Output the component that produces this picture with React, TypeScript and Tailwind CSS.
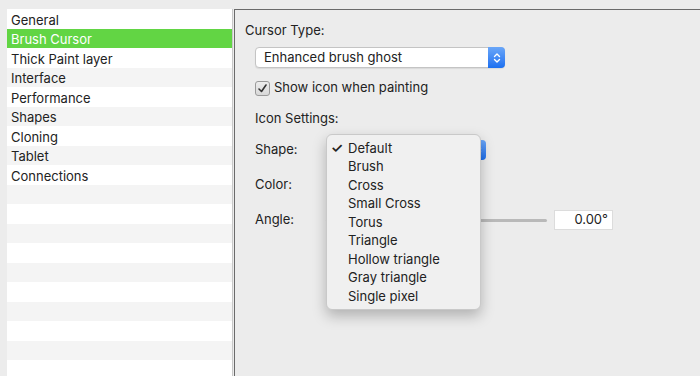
import React from "react";

const items = ["General", "Brush Cursor", "Thick Paint layer", "Interface", "Performance", "Shapes", "Cloning", "Tablet", "Connections"];
const menuItems = ["Default", "Brush", "Cross", "Small Cross", "Torus", "Triangle", "Hollow triangle", "Gray triangle", "Single pixel"];

function Stepper({ className }: { className: string }) {
  return (
    <div className={className}>
      <svg width="8" height="12" viewBox="0 0 8 12" fill="none" stroke="white" strokeWidth="1.4" strokeLinecap="round" strokeLinejoin="round">
        <path d="M1.5 4.5 L4 2 L6.5 4.5" />
        <path d="M1.5 7.5 L4 10 L6.5 7.5" />
      </svg>
    </div>
  );
}

export default function App() {
  const rows = Array.from({ length: 19 }, (_, i) => i);
  return (
    <div className="w-[700px] h-[376px] bg-[#ececec] overflow-hidden flex pt-[9px] pl-[7px] text-[13px] text-[#222]" style={{ fontFamily: "Inter, 'Noto Sans', sans-serif" }}>
      <div className="w-[226px] h-[400px] bg-white border-r border-[#c8c8c8] flex flex-col">
        {rows.map((i) => {
          const label = items[i];
          const selected = i === 1;
          const bg = selected ? "bg-[#62d544] text-white" : i % 2 === 1 ? "bg-[#f4f4f4]" : "bg-white";
          return (
            <div key={i} className={`h-[19.5px] shrink-0 flex items-center pl-[4px] pt-[3px] leading-none ${bg}`}>
              {label ?? ""}
            </div>
          );
        })}
      </div>
      <div className="relative flex-1 h-[400px] ml-[1px] border-l border-t border-[#6a6a6a] bg-[#ececec] flex flex-col pl-[10px] pt-[12px]">
        <div className="h-[16px] leading-[16px]">Cursor Type:</div>
        <div className="mt-[9px] ml-[10px] w-[250px] h-[21px] flex items-stretch rounded-[4px] bg-white border border-[#c4c4c4] shadow-[0_1px_1px_rgba(0,0,0,0.08)]">
          <div className="flex-1 flex items-center pl-[8px]">Enhanced brush ghost</div>
          <Stepper className="w-[17px] -my-px -mr-px rounded-r-[4px] bg-gradient-to-b from-[#6aa6f8] to-[#1a6ff0] flex items-center justify-center" />
        </div>
        <div className="mt-[12px] ml-[10px] flex items-center h-[16px]">
          <div className="w-[15px] h-[15px] rounded-[3px] border border-[#9a9a9a] bg-gradient-to-b from-[#ededed] to-[#d8d8d8] flex items-center justify-center">
            <svg width="11" height="11" viewBox="0 0 11 11" fill="none" stroke="#333" strokeWidth="1.6" strokeLinecap="round" strokeLinejoin="round">
              <path d="M2 6 L4.5 8.5 L9 2" />
            </svg>
          </div>
          <span className="ml-[4px]">Show icon when painting</span>
        </div>
        <div className="mt-[14px] ml-[10px] h-[16px] leading-[16px]">Icon Settings:</div>
        <div className="mt-[14px] ml-[10px] flex items-center h-[20px]">
          <span className="w-[71px]">Shape:</span>
          <div className="w-[160px] h-[20px] flex rounded-[4px] bg-white border border-[#c4c4c4]">
            <div className="flex-1" />
            <Stepper className="w-[17px] -my-px -mr-px rounded-r-[4px] bg-gradient-to-b from-[#6aa6f8] to-[#1a6ff0] flex items-center justify-center" />
          </div>
        </div>
        <div className="mt-[15px] ml-[10px] flex items-center h-[20px]">
          <span className="w-[71px]">Color:</span>
        </div>
        <div className="mt-[15px] ml-[10px] flex items-center h-[20px]">
          <span className="w-[71px]">Angle:</span>
          <div className="w-[221px] h-[3px] rounded-full bg-[#b9b9b9]" />
          <div className="ml-[7px] w-[59px] h-[20px] bg-white border border-[#dcdcdc] flex items-center justify-end pr-[4px]">0.00°</div>
        </div>

        <div className="absolute left-[91px] top-[124px] w-[155px] h-[176px] rounded-[6px] bg-[#f0f0f0] border border-[#c9c9c9] shadow-[0_6px_14px_rgba(0,0,0,0.25)] pt-[4px]">
          {menuItems.map((m, i) => (
            <div key={m} className="h-[18.5px] flex items-center leading-none">
              <span className="w-[21px] text-right pr-[5px] text-[14px] font-semibold">{i === 0 ? "✓" : ""}</span>
              <span>{m}</span>
            </div>
          ))}
        </div>
      </div>
    </div>
  );
}
